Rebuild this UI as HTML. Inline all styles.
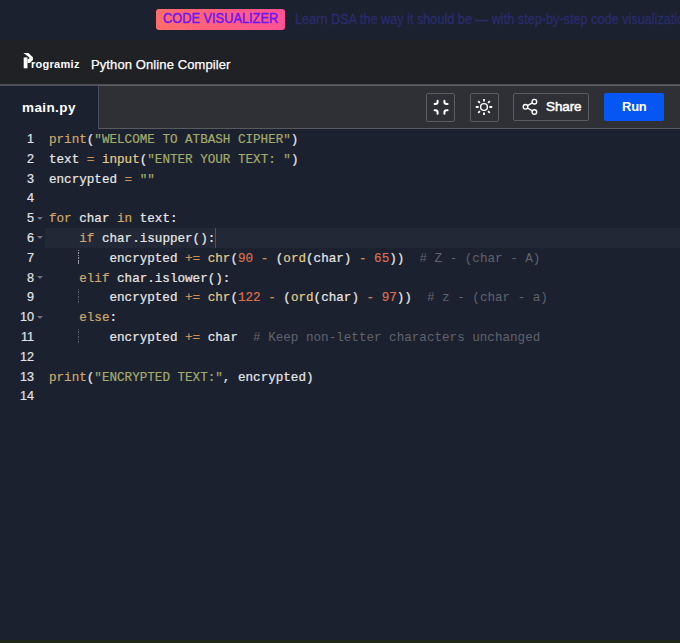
<!DOCTYPE html>
<html><head><meta charset="utf-8">
<style>
*{box-sizing:border-box;margin:0;padding:0}
html,body{width:680px;height:643px;overflow:hidden;background:#1c2130;font-family:"Liberation Sans",sans-serif}
#banner{position:absolute;left:0;top:0;width:680px;height:40px;background:#1c2130;white-space:nowrap;overflow:hidden}
#badge{position:absolute;left:156px;top:9px;width:129px;height:21px;border-radius:3px;background:linear-gradient(90deg,#ff6d6a,#ff5296)}
#badge span{position:absolute;left:7px;top:1px;font:14px/17px "Liberation Sans",sans-serif;color:#6c16ec;-webkit-text-stroke:0.45px #6c16ec;transform:scaleX(0.914);transform-origin:0 0;white-space:nowrap}
#learn{position:absolute;left:295px;top:11px;font:14px/17px "Liberation Sans",sans-serif;color:#292c6c;-webkit-text-stroke:0.3px #292c6c;transform:scaleX(0.906);transform-origin:0 0;white-space:nowrap}
#header{position:absolute;left:0;top:40px;width:680px;height:44px;background:#202124}
#logo{position:absolute;left:20px;top:10px}
#logotext{position:absolute;left:31px;top:17px;font:bold 11px/14px "Liberation Sans",sans-serif;color:#fff;letter-spacing:0.28px}
#title{position:absolute;left:91px;top:16px;font:13px/17px "Liberation Sans",sans-serif;color:#fff;letter-spacing:0.1px;-webkit-text-stroke:0.25px #fff}
#hline{position:absolute;left:0;top:84px;width:680px;height:1px;background:#505156}
#tabbar{position:absolute;left:0;top:85px;width:680px;height:44px;background:#2f3035}
#tab{position:absolute;left:0;top:0;width:98px;height:44px;background:#1c2130;border-top:1px solid #4a4f5d}
#tab span{position:absolute;left:22px;top:13px;font:bold 13.5px/17px "Liberation Sans",sans-serif;color:#fff;letter-spacing:0.4px}
#tabborder{position:absolute;left:98px;top:0;width:1px;height:44px;background:#4a4f5d}
#tabtop{position:absolute;left:99px;top:0;width:581px;height:1px;background:#5c5d61}
#tabbottom{position:absolute;left:99px;top:43px;width:581px;height:1px;background:#5a5b5f}
.btn{position:absolute;top:8px;height:29px;border:1px solid #5b5c61;border-radius:2px}
#run{position:absolute;left:604px;top:8px;width:60px;height:28px;background:#0556f3;border-radius:2px;color:#fff;font:bold 13px/28px "Liberation Sans",sans-serif;text-align:center;padding-left:0.5px;letter-spacing:-0.3px}
#share span{position:absolute;left:32px;top:5px;font:13.5px/16px "Liberation Sans",sans-serif;color:#fff;-webkit-text-stroke:0.5px #fff;letter-spacing:-0.1px}
#editor{position:absolute;left:0;top:129px;padding-top:0;width:680px;height:514px;background:#1c2130}
#gutter{position:absolute;left:0;top:0;width:45px}
.ln{height:19.8px;font:12.6px/21.8px "Liberation Sans",sans-serif;color:#e2e4e8;-webkit-text-stroke:0.2px currentColor;text-align:right;padding-right:11px;position:relative}
#code{position:absolute;left:45px;top:0;right:0}
.l{height:19.8px;font:12.6px/23.8px "Liberation Mono",monospace;color:#e8e8e8;white-space:pre;padding-left:4px;position:relative;-webkit-text-stroke:0.2px currentColor}
.act{background:#232836}
.fold{position:absolute;left:36.5px;top:8.5px;width:0;height:0;border-left:3px solid transparent;border-right:3px solid transparent;border-top:3.6px solid #6f737c}
.guide{position:absolute;left:33px;top:2px;width:1px;height:15px;background:repeating-linear-gradient(#575b68 0 1.5px,transparent 1.5px 2.5px)}
.guide.hi{background:repeating-linear-gradient(#9a9da5 0 1.5px,transparent 1.5px 2.5px)}
#cursor{position:absolute;left:170px;top:0;width:1px;height:20px;background:#4f5463}
.k{color:#cfa86c}.f{color:#e3cd8b}.s{color:#a2ab6c}.o{color:#cc8f56}.n{color:#dc6e4e}.c{color:#5f636b;-webkit-text-stroke:0}
#bottom{position:absolute;left:0;top:640px;width:680px;height:3px;background:#1f2719}
</style></head><body>
<div id="banner">
  <div id="badge"><span>CODE VISUALIZER</span></div>
  <div id="learn">Learn DSA the way it should be — with step-by-step code visualization</div>
</div>
<div id="header">
  <svg id="logo" width="20" height="20" viewBox="20 50 20 20"><path fill="#fff" d="M23.4,53.0 L28.4,53.0 L32.9,57.3 L32.9,59.9 L29.8,62.9 L27.5,62.9 L27.5,59.5 L28.7,59.1 L29.6,58.1 L28.8,57.1 Z"/><path fill="#fff" d="M23.7,57.4 L27.5,57.4 L27.5,68.3 L23.7,68.3 Z"/></svg>
  <div id="logotext">rogramiz</div>
  <div id="title">Python Online Compiler</div>
</div>
<div id="hline"></div>
<div id="tabbar">
  <div id="tab"><span>main.py</span></div>
  <div id="tabborder"></div>
  <div id="tabbottom"></div><div id="tabtop"></div>
  <div class="btn" style="left:426px;width:29px"><svg style="position:absolute;left:-1px;top:-1px" width="29" height="29" viewBox="426 93 29 29" fill="none" stroke="#fff" stroke-width="2" stroke-linecap="round"><path d="M437.6,100.7 V101.7 Q437.6,103.9 435.4,103.9 H434.6"/><path d="M444.4,100.7 V101.7 Q444.4,103.9 446.6,103.9 H447.6"/><path d="M437.6,113.8 V112.5 Q437.6,110.3 435.4,110.3 H434.6"/><path d="M444.4,113.8 V112.5 Q444.4,110.3 446.6,110.3 H447.6"/></svg></div>
  <div class="btn" style="left:470px;width:29px"><svg style="position:absolute;left:-1px;top:-1px" width="29" height="29" viewBox="470 93 29 29" fill="none" stroke="#fff"><circle cx="484" cy="107" r="3.4" stroke-width="1.4"/><g stroke-width="1.8"><path d="M484,99 V101.6 M484,112.4 V115 M475.8,107 H478.6 M489.4,107 H492.2 M478.2,101.2 L479.9,102.9 M488.1,111.1 L489.8,112.8 M478.2,112.8 L479.9,111.1 M488.1,102.9 L489.8,101.2"/></g></svg></div>
  <div class="btn" id="share" style="left:513px;width:76px;height:28px"><svg style="position:absolute;left:-1px;top:-1px" width="30" height="29" viewBox="513 93 30 29" fill="none" stroke="#fff" stroke-width="1.4"><circle cx="525.5" cy="106.8" r="2.3"/><circle cx="534.4" cy="101.7" r="2.3"/><circle cx="534.4" cy="112" r="2.3"/><path d="M527.5,105.6 L532.4,102.9 M527.5,108 L532.4,110.8"/></svg><span>Share</span></div>
  <div id="run">Run</div>
</div>
<div id="editor">
  <div id="gutter">
    <div class="ln">1</div><div class="ln">2</div><div class="ln">3</div><div class="ln">4</div>
    <div class="ln">5<i class="fold"></i></div><div class="ln">6<i class="fold"></i></div><div class="ln">7</div>
    <div class="ln">8<i class="fold"></i></div><div class="ln">9</div><div class="ln">10<i class="fold"></i></div>
    <div class="ln">11</div><div class="ln">12</div><div class="ln">13</div><div class="ln">14</div>
  </div>
  <div id="code">
<div class="l"><span class="k">print</span>(<span class="s">"WELCOME TO ATBASH CIPHER"</span>)</div>
<div class="l">text <span class="o">=</span> <span class="f">input</span>(<span class="s">"ENTER YOUR TEXT: "</span>)</div>
<div class="l">encrypted <span class="o">=</span> <span class="s">""</span></div>
<div class="l"> </div>
<div class="l"><span class="k">for</span> char <span class="k">in</span> text:</div>
<div class="l act"><i id="cursor"></i>    <span class="k">if</span> char.isupper():</div>
<div class="l"><i class="guide hi"></i>        encrypted <span class="o">+=</span> <span class="f">chr</span>(<span class="n">90</span> <span class="o">-</span> (<span class="f">ord</span>(char) <span class="o">-</span> <span class="n">65</span>))  <span class="c"># Z - (char - A)</span></div>
<div class="l">    <span class="k">elif</span> char.islower():</div>
<div class="l"><i class="guide"></i>        encrypted <span class="o">+=</span> <span class="f">chr</span>(<span class="n">122</span> <span class="o">-</span> (<span class="f">ord</span>(char) <span class="o">-</span> <span class="n">97</span>))  <span class="c"># z - (char - a)</span></div>
<div class="l">    <span class="k">else</span>:</div>
<div class="l"><i class="guide"></i>        encrypted <span class="o">+=</span> char  <span class="c"># Keep non-letter characters unchanged</span></div>
<div class="l"> </div>
<div class="l"><span class="k">print</span>(<span class="s">"ENCRYPTED TEXT:"</span>, encrypted)</div>
<div class="l"> </div>
  </div>
</div>
<div id="bottom"></div>
</body></html>
